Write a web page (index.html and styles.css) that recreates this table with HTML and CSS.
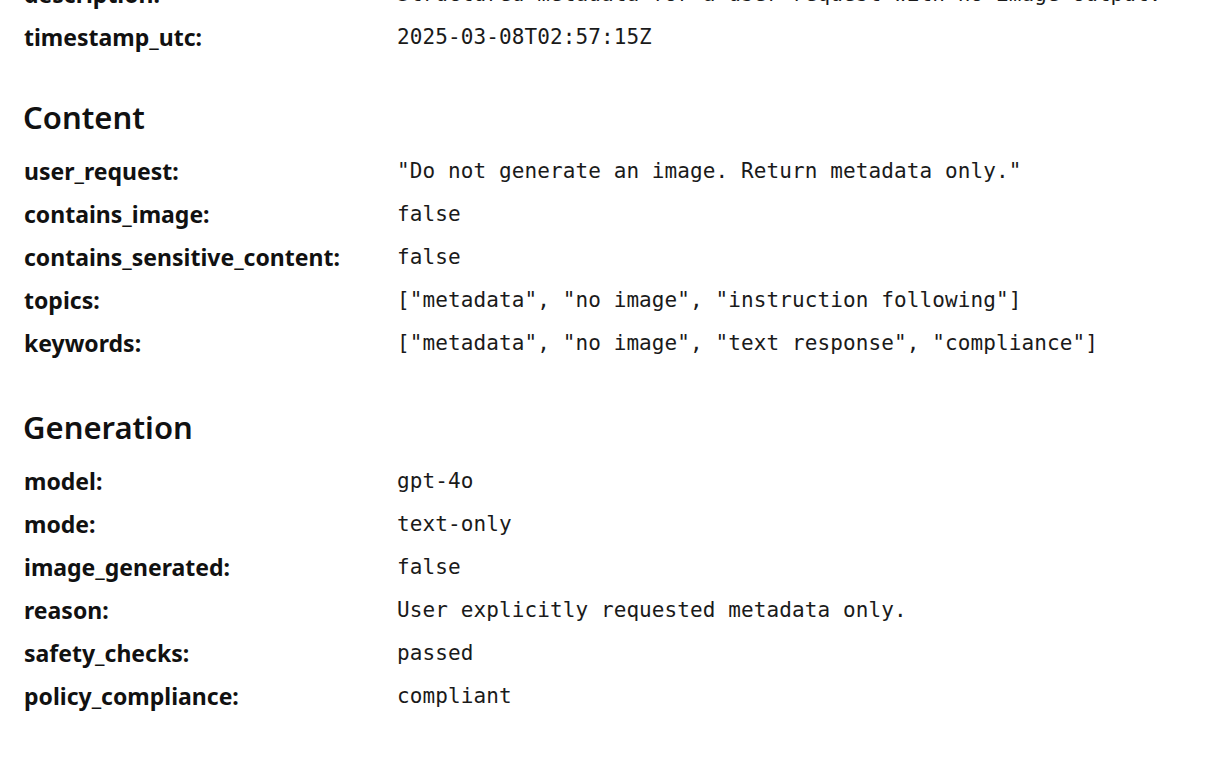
FILE: index.html
```html
<!DOCTYPE html>
<html lang="en">
<head>
<meta charset="utf-8">
<title>Metadata</title>
<link rel="stylesheet" href="styles.css">
</head>
<body>
<main class="doc">
  <section class="section first">
    <dl class="fields">
      <dt>description:</dt><dd>Structured metadata for a user request with no image output.</dd>
      <dt>timestamp_utc:</dt><dd>2025-03-08T02:57:15Z</dd>
    </dl>
  </section>
  <section class="section">
    <h2>Content</h2>
    <dl class="fields">
      <dt>user_request:</dt><dd>"Do not generate an image. Return metadata only."</dd>
      <dt>contains_image:</dt><dd>false</dd>
      <dt>contains_sensitive_content:</dt><dd>false</dd>
      <dt>topics:</dt><dd>["metadata", "no image", "instruction following"]</dd>
      <dt>keywords:</dt><dd>["metadata", "no image", "text response", "compliance"]</dd>
    </dl>
  </section>
  <section class="section">
    <h2>Generation</h2>
    <dl class="fields">
      <dt>model:</dt><dd>gpt-4o</dd>
      <dt>mode:</dt><dd>text-only</dd>
      <dt>image_generated:</dt><dd>false</dd>
      <dt>reason:</dt><dd>User explicitly requested metadata only.</dd>
      <dt>safety_checks:</dt><dd>passed</dd>
      <dt>policy_compliance:</dt><dd>compliant</dd>
    </dl>
  </section>
</main>
</body>
</html>
```

FILE: styles.css
```css
html, body {
  margin: 0;
  padding: 0;
  background: #ffffff;
}

body {
  color: #111111;
  font-family: "Noto Sans", "Open Sans", sans-serif;
  overflow: hidden;
}

.doc {
  margin-top: -27px;
  padding-left: 24px;
}

.section.first {
  margin-bottom: -4px;
}

.section h2 {
  margin: 40px 0 11px -1px;
  font-size: 31px;
  line-height: 44px;
  font-weight: 600;
  color: #111111;
}

.fields {
  display: grid;
  grid-template-columns: 373px 1fr;
  grid-auto-rows: 43px;
  margin: 0;
}

.fields dt {
  margin: 0;
  font-size: 23px;
  font-weight: 700;
  line-height: 43px;
  white-space: nowrap;
}

.fields dd {
  margin: 0;
  font-family: "DejaVu Sans Mono", "Liberation Mono", monospace;
  font-size: 21px;
  letter-spacing: 0.1px;
  line-height: 43px;
  color: #1a1a1a;
  white-space: nowrap;
}
```
